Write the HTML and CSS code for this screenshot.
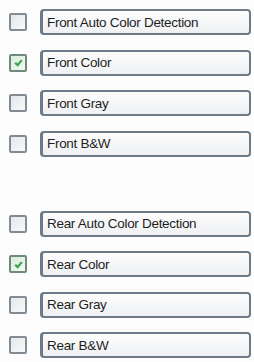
FILE: index.html
```html
<!DOCTYPE html>
<html lang="en">
<head>
    <meta charset="UTF-8">
    <title>Scan Color Options</title>
    <link rel="stylesheet" href="styles.css">
</head>
<body>
    <div class="option-list">
        <div class="option-group">
            <div class="option-row"><span class="check-box"></span><button class="option-btn">Front Auto Color Detection</button></div>
            <div class="option-row"><span class="check-box checked"><svg viewBox="0 0 10 10"><path d="M2 5.2 L4.2 7.4 L8 2.8" /></svg></span><button class="option-btn">Front Color</button></div>
            <div class="option-row"><span class="check-box"></span><button class="option-btn">Front Gray</button></div>
            <div class="option-row"><span class="check-box"></span><button class="option-btn">Front B&amp;W</button></div>
        </div>
        <div class="option-group">
            <div class="option-row"><span class="check-box"></span><button class="option-btn">Rear Auto Color Detection</button></div>
            <div class="option-row"><span class="check-box checked"><svg viewBox="0 0 10 10"><path d="M2 5.2 L4.2 7.4 L8 2.8" /></svg></span><button class="option-btn">Rear Color</button></div>
            <div class="option-row"><span class="check-box"></span><button class="option-btn">Rear Gray</button></div>
            <div class="option-row"><span class="check-box"></span><button class="option-btn">Rear B&amp;W</button></div>
        </div>
    </div>
</body>
</html>
```

FILE: styles.css
```css
body {
    margin: 0;
    background-color: #fdfdfd;
    font-family: 'Liberation Sans', Arial, sans-serif;
    color: #222;
}
.option-list {
    display: flex;
    flex-direction: column;
    gap: 54px;
    padding: 9px 3px 0 9px;
}
.option-group {
    display: flex;
    flex-direction: column;
    gap: 14.5px;
}
.option-row {
    display: flex;
    align-items: center;
    gap: 13px;
    height: 26px;
}
.check-box {
    width: 14px;
    height: 14px;
    border: 2px solid #838c96;
    border-radius: 2px;
    background: linear-gradient(135deg, #e4e6e9, #fafafa);
    display: flex;
    align-items: center;
    justify-content: center;
}
.check-box.checked {
    border-color: #6f8a7c;
    background: linear-gradient(135deg, #d6ecd9, #f4faf4);
}
.check-box svg {
    width: 11px;
    height: 11px;
}
.check-box svg path {
    fill: none;
    stroke: #3aa64a;
    stroke-width: 2;
}
.option-btn {
    flex: 1;
    height: 26px;
    padding: 0 0 0 4px;
    text-align: left;
    border: 2px solid #6d7a88;
    border-left-width: 3px;
    border-radius: 4px;
    background: linear-gradient(#fdfdfd, #eef0f2);
    font-family: inherit;
    font-size: 13.5px;
    color: #1e1e1e;
    letter-spacing: -0.3px;
}
```
